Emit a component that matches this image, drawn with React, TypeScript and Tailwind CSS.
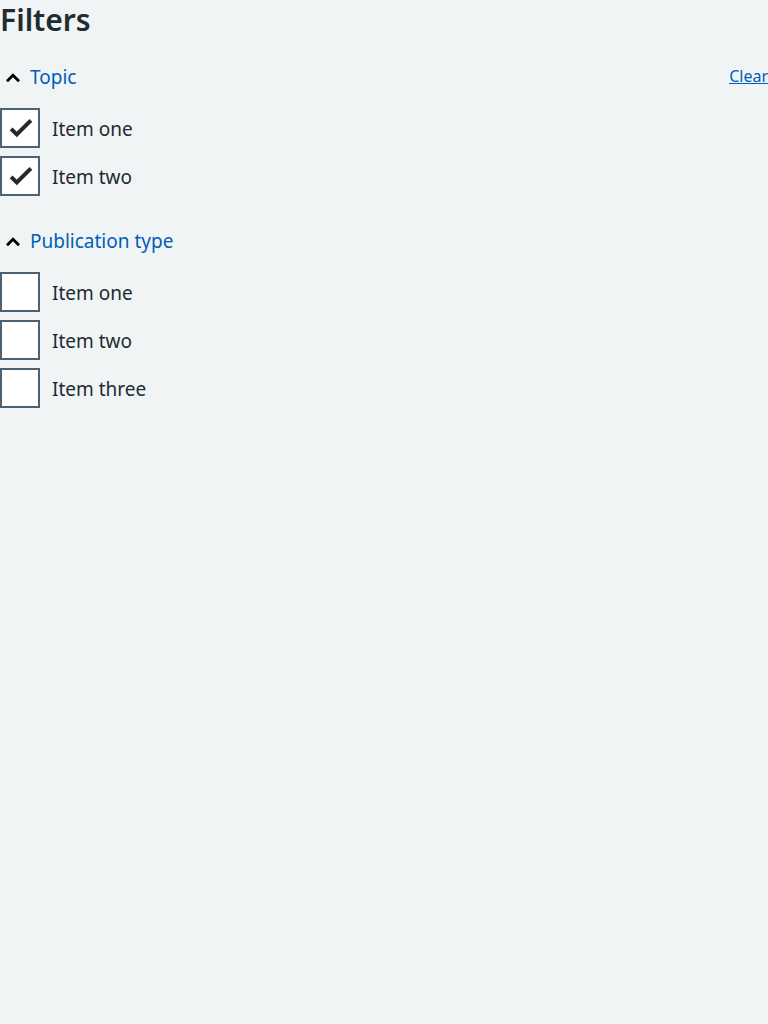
import { useState } from 'react';

type Group = { id: string; title: string; items: string[] };

const groups: Group[] = [
  { id: 'topic', title: 'Topic', items: ['Item one', 'Item two'] },
  { id: 'publication-type', title: 'Publication type', items: ['Item one', 'Item two', 'Item three'] },
];

type CheckboxProps = { id: string; label: string; checked: boolean; onChange: () => void };

function Checkbox({ id, label, checked, onChange }: CheckboxProps) {
  return (
    <li className="flex items-center">
      <span className="grid size-10 shrink-0">
        <input
          id={id}
          type="checkbox"
          checked={checked}
          onChange={onChange}
          className="col-start-1 row-start-1 size-10 cursor-pointer appearance-none border-2 border-[#4c6272] bg-white focus-visible:outline-4 focus-visible:outline-[#ffeb3b]"
        />
        {checked && (
          <svg viewBox="0 0 40 40" className="pointer-events-none col-start-1 row-start-1 size-10" aria-hidden="true">
            <path d="M11.1 20.8 16.8 26.5 30.9 12.3" fill="none" stroke="#212b32" strokeWidth="4" />
          </svg>
        )}
      </span>
      <label htmlFor={id} className="cursor-pointer px-3 pt-0.5 text-[19px] leading-7">
        {label}
      </label>
    </li>
  );
}

type FilterGroupProps = {
  group: Group;
  selected: string[];
  onToggle: (key: string) => void;
  onClear: () => void;
};

function FilterGroup({ group, selected, onToggle, onClear }: FilterGroupProps) {
  const [open, setOpen] = useState(true);
  const hasSelection = group.items.some((item) => selected.includes(`${group.id}/${item}`));

  return (
    <section>
      <div className="flex items-start justify-between">
        <button
          type="button"
          aria-expanded={open}
          onClick={() => setOpen(!open)}
          className="flex cursor-pointer items-center gap-1 text-[19px] leading-[26px] text-[#005eb8]"
        >
          <svg viewBox="0 0 26 26" className={open ? 'size-[26px]' : 'size-[26px] rotate-180'} aria-hidden="true">
            <path d="M7 17.2 13 11.2 19 17.2" fill="none" stroke="#000" strokeWidth="2.8" />
          </svg>
          {group.title}
        </button>
        {hasSelection && (
          <a
            href="#clear"
            onClick={(event) => {
              event.preventDefault();
              onClear();
            }}
            className="text-base leading-6 text-[#005eb8] underline"
          >
            Clear
          </a>
        )}
      </div>
      {open && (
        <ul className="mt-[18px] flex flex-col gap-2">
          {group.items.map((item) => {
            const key = `${group.id}/${item}`;
            return (
              <Checkbox
                key={key}
                id={key}
                label={item}
                checked={selected.includes(key)}
                onChange={() => onToggle(key)}
              />
            );
          })}
        </ul>
      )}
    </section>
  );
}

export default function App() {
  const [selected, setSelected] = useState(['topic/Item one', 'topic/Item two']);

  const toggle = (key: string) =>
    setSelected((keys) => (keys.includes(key) ? keys.filter((k) => k !== key) : [...keys, key]));
  const clear = (id: string) => setSelected((keys) => keys.filter((k) => !k.startsWith(`${id}/`)));

  return (
    <main className="min-h-screen bg-[#f0f4f5] font-['Noto_Sans',sans-serif] text-[#212b32]">
      <h2 className="mb-6 text-[30px] leading-10 font-semibold">Filters</h2>
      <form className="flex flex-col gap-8">
        {groups.map((group) => (
          <FilterGroup
            key={group.id}
            group={group}
            selected={selected}
            onToggle={toggle}
            onClear={() => clear(group.id)}
          />
        ))}
      </form>
    </main>
  );
}
